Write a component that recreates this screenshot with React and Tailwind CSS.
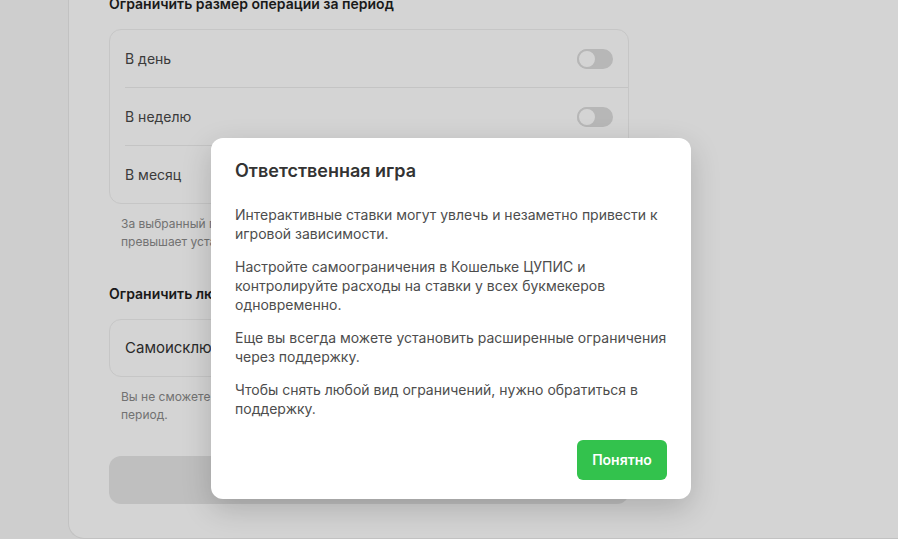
import React from "react";

function Toggle() {
  return (
    <div className="w-9 h-5 rounded-full bg-[#dcdcdc] relative shrink-0">
      <div className="absolute left-0 top-0 w-5 h-5 rounded-full bg-white border-2 border-[#dcdcdc]" />
    </div>
  );
}

function LimitRow({ label, last }) {
  return (
    <div>
      <div className="h-[57px] flex items-center justify-between pl-[15px] pr-[15px]">
        <span className="text-sm text-[#474747]">{label}</span>
        <Toggle />
      </div>
      {!last && <div className="ml-[15px] h-px bg-[#ececec]" />}
    </div>
  );
}

export default function App() {
  const periods = ["В день", "В неделю", "В месяц"];

  return (
    <div className="relative w-[898px] h-[539px] overflow-hidden bg-[#f8f8f8] font-['Inter','Noto_Sans',sans-serif]">
      <div className="flex h-full">
        <div className="w-[68px] shrink-0" />
        <div className="flex-1 bg-white border-l border-b border-[#eaeaea] rounded-bl-2xl pl-[40px] h-[539px]">
          <div className="w-[520px] -mt-[6px]">
            <h2 className="text-sm leading-5 font-semibold text-[#1f1f1f]">
              Ограничить размер операций за период
            </h2>
            <div className="mt-[15px] border border-[#efefef] rounded-xl">
              {periods.map((p, i) => (
                <LimitRow key={p} label={p} last={i === periods.length - 1} />
              ))}
            </div>
            <p className="mt-[11px] px-3 text-xs leading-[18px] text-[#8a8a8a]">
              За выбранный период сумма ваших операций не может быть больше, если она
              <br />
              превышает установленный лимит.
            </p>
            <h2 className="mt-[33px] text-sm leading-5 font-semibold text-[#1f1f1f]">
              Ограничить любую активность
            </h2>
            <div className="mt-[15px] h-[58px] border border-[#efefef] rounded-xl flex items-center px-[15px]">
              <span className="text-[15px] text-[#333]">Самоисключение</span>
            </div>
            <p className="mt-[11px] px-3 text-xs leading-[18px] text-[#8a8a8a]">
              Вы не сможете делать ставки и пополнять баланс в течение выбранного
              <br />
              период.
            </p>
            <div className="mt-[32px] h-12 rounded-xl bg-[#e6e6e6]" />
          </div>
        </div>
      </div>

      {/* overlay */}
      <div className="absolute inset-0 bg-[rgba(0,0,0,0.17)] flex justify-center items-start pt-[138px] pl-1">
        <div className="w-[480px] bg-white rounded-xl shadow-[0_10px_30px_rgba(0,0,0,0.18)] px-6 pt-[21px] pb-[19px]">
          <h3 className="text-lg leading-6 font-semibold text-[#333]">Ответственная игра</h3>
          <div className="mt-[22px] flex flex-col gap-[14px] text-sm leading-[19px] text-[#4d4d4d]">
            <p>Интерактивные ставки могут увлечь и незаметно привести к игровой зависимости.</p>
            <p>
              Настройте самоограничения в Кошельке ЦУПИС и контролируйте расходы на ставки у всех
              букмекеров одновременно.
            </p>
            <p>Еще вы всегда можете установить расширенные ограничения через поддержку.</p>
            <p>Чтобы снять любой вид ограничений, нужно обратиться в поддержку.</p>
          </div>
          <div className="mt-[22px] flex justify-end">
            <button className="w-[90px] h-10 rounded-md bg-[#33c24d] text-white text-sm font-semibold">
              Понятно
            </button>
          </div>
        </div>
      </div>
    </div>
  );
}
